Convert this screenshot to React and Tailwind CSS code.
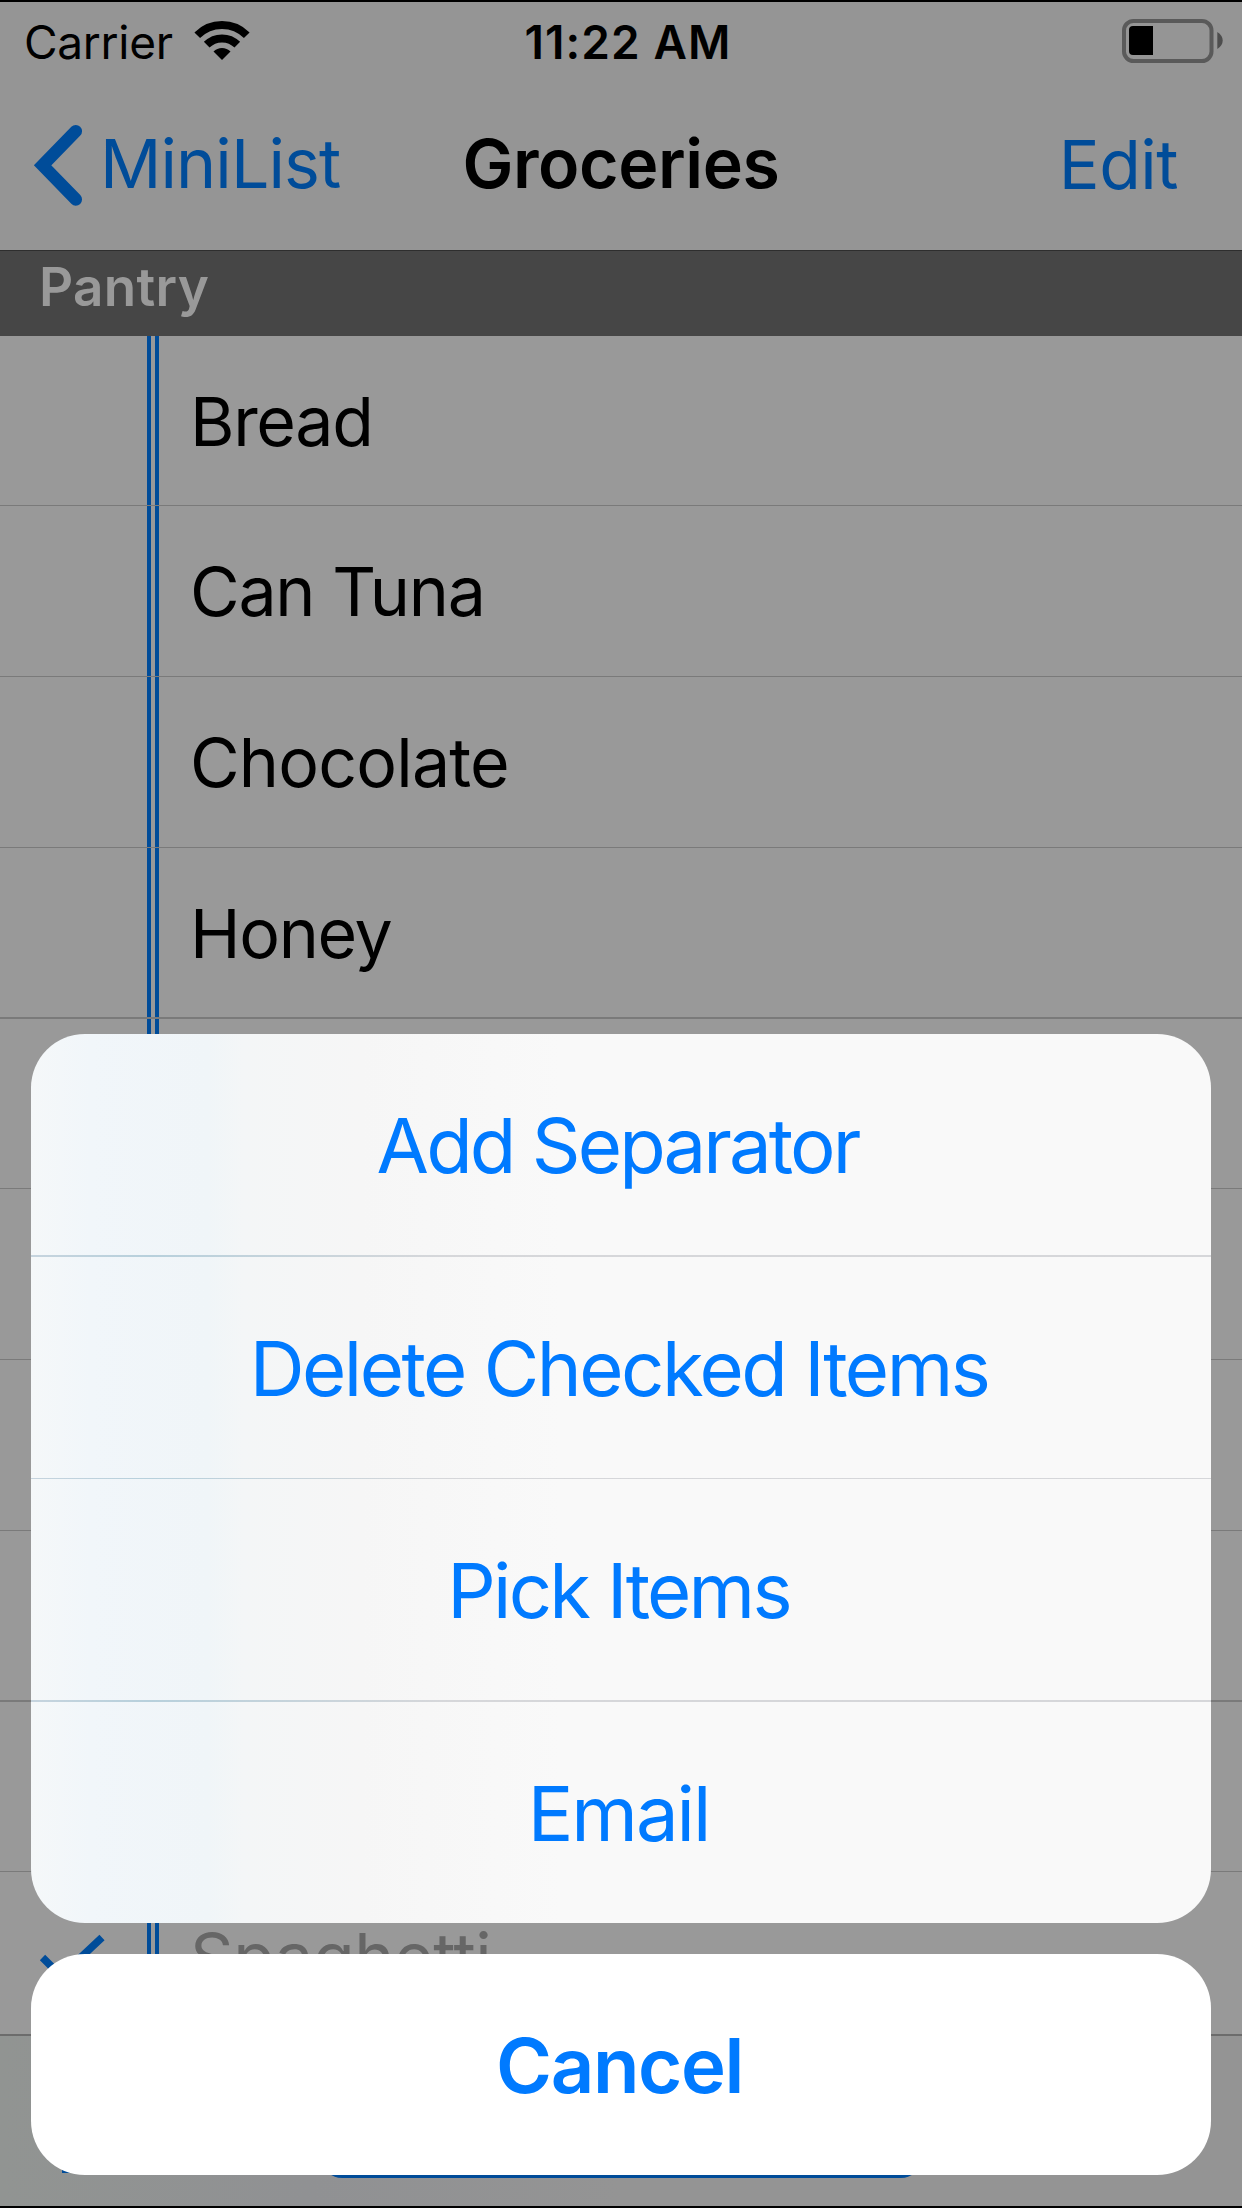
import React from 'react';

const items = [
  { name: 'Bread', row: 'h-[170px] border-b', text: 'tracking-[-1.3px]' },
  { name: 'Can Tuna', row: 'h-[171px] border-b', text: 'tracking-[-1.25px]' },
  { name: 'Chocolate', row: 'h-[171px] border-b', text: 'tracking-[-0.8px]' },
  { name: 'Honey', row: 'h-[171px] border-b-2', text: 'tracking-[-1.3px]' },
  { name: '', row: 'h-[170px] border-b' },
  { name: '', row: 'h-[171px] border-b' },
  { name: '', row: 'h-[171px] border-b' },
  { name: '', row: 'h-[171px] border-b-2' },
  { name: '', row: 'h-[170px] border-b' },
  { name: 'Spaghetti', row: 'h-[162px]', text: 'tracking-[-0.4px]', checked: true },
];

const actions = [
  { label: 'Add Separator', line: 'h-0.5', text: 'pr-[7px] tracking-[-2.9px]' },
  { label: 'Delete Checked Items', line: 'h-px', text: 'pr-[4px] tracking-[-2.5px]' },
  { label: 'Pick Items', line: 'h-0.5', text: 'pr-[5px] tracking-[-2.75px]' },
  { label: 'Email', line: '', text: 'pr-[5px] tracking-[-2px]' },
];

function StatusBar() {
  return (
    <div className="h-[82px] pt-[12px] pl-[24px] pr-[19px] grid grid-cols-3 text-[46px] leading-[56px] text-black">
      <div className="flex">
        <span className="tracking-[-0.3px]">Carrier</span>
        <svg className="ml-[21px] mt-[6px] w-[56px] h-[42px]" viewBox="0 0 56 42" fill="none" stroke="currentColor" strokeWidth="8">
          <path d="M3.25 15.25A35 35 0 0 1 52.75 15.25" />
          <path d="M12.7 24.7A21.7 21.7 0 0 1 43.3 24.7" />
          <path d="M28 40L19.5 31.5A12 12 0 0 1 36.5 31.5Z" fill="currentColor" stroke="none" />
        </svg>
      </div>
      <div className="pl-[9px] text-center font-semibold tracking-[1.1px]">11:22 AM</div>
      <div className="flex justify-end">
        <svg className="mt-[4px] w-[102px] h-[46px]" viewBox="0 0 102 46">
          <rect x="3" y="3" width="87.5" height="40" rx="9.5" fill="none" stroke="#5a5a5a" strokeWidth="4" />
          <path d="M12 8H32V37H12Q8 37 8 33V12Q8 8 12 8Z" />
          <path d="M96.3 14Q101.7 17.5 101.7 22.5T96.3 31Z" fill="#4d4d4d" />
        </svg>
      </div>
    </div>
  );
}

function NavBar() {
  return (
    <div className="h-[166px] px-[31px] grid grid-cols-3 text-[68px] leading-[82px] text-[#004c99]">
      <div className="flex items-start">
        <svg className="mt-[38px] w-[52px] h-[84px]" viewBox="0 0 52 84" fill="none" stroke="currentColor" strokeWidth="12.5" strokeLinecap="round">
          <path d="M44.8 9.2L11.6 43.3L44.8 77.4" />
        </svg>
        <span className="mt-[38px] ml-[17px] tracking-[-0.9px]">MiniList</span>
      </div>
      <h1 className="mt-[38px] text-center font-semibold text-black tracking-[-0.4px]">Groceries</h1>
      <span className="mt-[39px] mr-[33px] text-right tracking-[-0.5px]">Edit</span>
    </div>
  );
}

function ListRow({ item }) {
  return (
    <li className={'flex border-[#7a7a7a] ' + item.row}>
      <div className="w-[147px] shrink-0">
        {item.checked && (
          <svg className="mt-[60px] ml-[38px] w-[70px] h-[54px]" viewBox="0 0 70 54" fill="none" stroke="#004c99" strokeWidth="7.5">
            <path d="M4.5 25.5L23 44L64 5.5" />
          </svg>
        )}
      </div>
      <div className="w-3 shrink-0 border-x-4 border-[#004c99]"></div>
      <span className={'ml-[31px] mt-[44px] text-[68px] leading-[82px] ' + (item.checked ? 'text-[#666666] ' : 'text-black ') + item.text}>
        {item.name}
      </span>
    </li>
  );
}

function Toolbar() {
  return (
    <div className="h-[172px] flex border-t-2 border-[#6c6c6c] bg-linear-to-r from-[#919492] via-[#909193] via-25% to-[#949494] to-50%">
      <div className="w-[322px] pl-[62px] pt-[71px]">
        <div className="size-[66px] border-4 border-[#004c99]"></div>
      </div>
      <div className="w-[599px] h-[142px] rounded-[20px] bg-[#004c99]"></div>
    </div>
  );
}

function ActionSheet() {
  return (
    <div className="absolute inset-x-[31px] top-[1032px] text-[76px] leading-[92px] text-[#007aff] text-center">
      <div className="rounded-[54px] overflow-hidden bg-[linear-gradient(to_right,#f5f8f9_0%,#f1f6fa_5%,#f0f5f8_15%,#f4f6f7_18%,#f6f6f6_28%,#f9f9f9_45%)]">
        {actions.map((action) => (
          <React.Fragment key={action.label}>
            <button className={'block w-full h-[221px] ' + action.text}>{action.label}</button>
            <div className={'bg-linear-to-r from-[#c6d4de] via-[#b7d0dc] via-10% to-[#d6d7da] to-35% ' + action.line}></div>
          </React.Fragment>
        ))}
      </div>
      <button className="block w-full h-[221px] mt-[31px] pr-[3px] rounded-[54px] bg-white font-semibold tracking-[-1.4px]">Cancel</button>
    </div>
  );
}

function App() {
  return (
    <div className="relative w-[1242px] h-[2208px] overflow-hidden bg-[#999999] border-y-2 border-black font-['Inter',sans-serif]">
      <div className="h-[249px] bg-[#959595] border-b border-[#2e2e2e]">
        <StatusBar />
        <NavBar />
      </div>
      <h2 className="h-[85px] pl-[39px] pt-[4px] bg-[#464646] text-[53px] leading-[64px] font-semibold tracking-[0.3px] text-[#999999]">Pantry</h2>
      <ul>
        {items.map((item, i) => <ListRow key={i} item={item} />)}
      </ul>
      <Toolbar />
      <ActionSheet />
    </div>
  );
}

export default App;
